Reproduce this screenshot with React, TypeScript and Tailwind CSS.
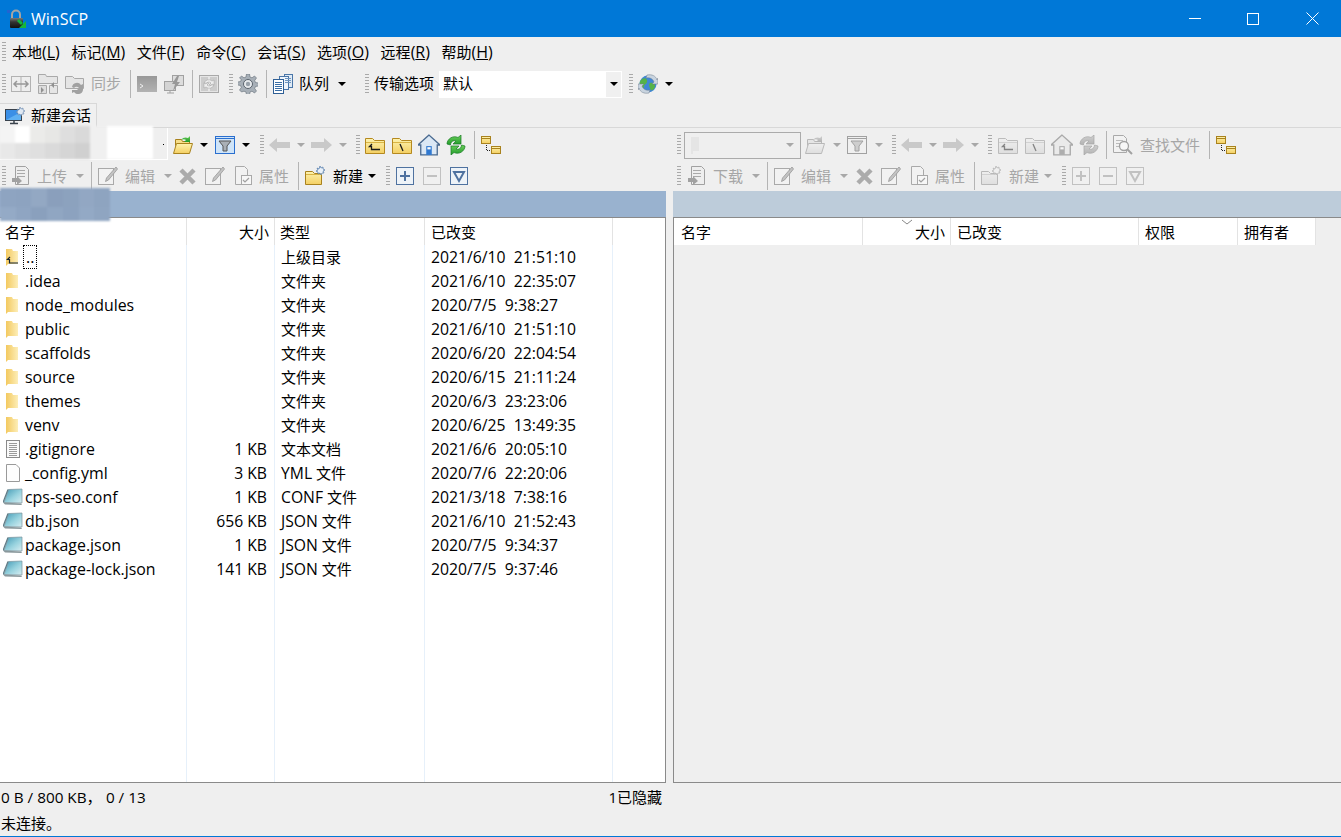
import React from "react";

const FONT = "font-['Open_Sans','Noto_Sans_CJK_SC',sans-serif]";

function Defs() {
  return (
    <svg className="absolute w-0 h-0" aria-hidden="true">
      <defs>
        <linearGradient id="fy" x1="0" y1="0" x2="0" y2="1">
          <stop offset="0" stopColor="#fdf3b0" />
          <stop offset="1" stopColor="#f4cf62" />
        </linearGradient>
        <linearGradient id="fn" x1="0" y1="0" x2="1" y2="0">
          <stop offset="0" stopColor="#f3c95f" />
          <stop offset="1" stopColor="#fdeeb8" />
        </linearGradient>
        <linearGradient id="gr" x1="0" y1="0" x2="0" y2="1">
          <stop offset="0" stopColor="#6ccf5a" />
          <stop offset="1" stopColor="#1f9a2a" />
        </linearGradient>
        <linearGradient id="term" x1="0" y1="0" x2="0" y2="1">
          <stop offset="0" stopColor="#444" />
          <stop offset="1" stopColor="#777" />
        </linearGradient>
        <linearGradient id="teal" x1="0" y1="0" x2="1" y2="1">
          <stop offset="0" stopColor="#3f97b3" />
          <stop offset="0.55" stopColor="#97d2de" />
          <stop offset="1" stopColor="#d8eef2" />
        </linearGradient>
        <linearGradient id="lock" x1="0" y1="0" x2="0" y2="1">
          <stop offset="0" stopColor="#7a7a7a" />
          <stop offset="0.4" stopColor="#333" />
          <stop offset="1" stopColor="#111" />
        </linearGradient>
      </defs>
    </svg>
  );
}

type I = { off?: boolean };
const dim = (off?: boolean) => (off ? "grayscale opacity-50" : "");

function Svg({ off, s = 20, children }: I & { s?: number; children: React.ReactNode }) {
  return (
    <svg width={s} height={s} viewBox="0 0 20 20" className={`shrink-0 ${dim(off)}`}>
      {children}
    </svg>
  );
}

const Lock = () => (
  <svg width="20" height="20" viewBox="0 0 20 20" className="shrink-0">
    <rect x="0" y="1" width="3" height="3" fill="#2a5fd0" opacity="0.8" />
    <path d="M5 9V5.500a4 4 0 0 1 8 0V9" fill="none" stroke="#a5a5a5" strokeWidth="2" />
    <rect x="3" y="9" width="13" height="10" rx="1" fill="url(#lock)" />
    <path d="M11 11l4 4" stroke="#17b53a" strokeWidth="3" />
    <path d="M19 12v7h-7z" fill="#17b53a" />
  </svg>
);

const Compare = (p: I) => (
  <Svg {...p}>
    <rect x="0.500" y="2.500" width="19" height="15" fill="#eee" stroke="#777" />
    <path d="M10 3v14" stroke="#777" />
    <path d="M3 10h14M6 7l-3 3 3 3M14 7l3 3-3 3" fill="none" stroke="#444" strokeWidth="1.500" />
  </Svg>
);
const SyncDirs = (p: I) => (
  <Svg {...p}>
    <path d="M.5.5h7l1 2h11v7H.5z" fill="#ddd" stroke="#666" />
    <path d="M.5 11.500h8v8h-8z" fill="#ccc" stroke="#666" />
    <path d="M11.500 11.500h8v8h-8z" fill="#ddd" stroke="#666" />
    <path d="M3 13l3 3-3 3zM16 8l-3 3 3 3z" fill="#333" />
  </Svg>
);
const SyncBrowse = (p: I) => (
  <Svg {...p}>
    <path d="M.5 2.500h7l2 2h9v10H.5z" fill="#ddd" stroke="#666" />
    <path d="M7 13a5 5 0 0 1 9-2l2-1v6h-6l2-2a3 3 0 0 0-5 0z" fill="#555" />
    <path d="M18 16a5 5 0 0 1-9 2l-2 1v-3z" fill="#555" />
  </Svg>
);
const Terminal = (p: I) => (
  <Svg {...p}>
    <rect x="0" y="2" width="20" height="16" fill="url(#term)" />
    <path d="M3 10l3 2-3 2" fill="none" stroke="#eee" strokeWidth="1" />
  </Svg>
);
const Putty = (p: I) => (
  <Svg {...p}>
    <rect x="8.500" y="1.500" width="11" height="10" fill="#ccc" stroke="#555" />
    <rect x=".5" y="7.500" width="11" height="9" fill="#bbb" stroke="#555" />
    <path d="M3 19h7M6 17v2" stroke="#555" />
    <path d="M13 2l-5 8h3l-2 7 7-9h-3l2-6z" fill="#444" />
  </Svg>
);
const SyncPanel = (p: I) => (
  <Svg {...p}>
    <rect x=".5" y="1.500" width="19" height="17" fill="#ddd" stroke="#666" />
    <path d="M2 3h7v14H2zM11 3h7v14h-7z" fill="#aaa" />
    <path d="M5 9a5 5 0 0 1 8-2l2-1v5h-5l2-2a3 3 0 0 0-5 1zM15 11a5 5 0 0 1-8 2l-2 1v-5h5l-2 2a3 3 0 0 0 5-1z" fill="#eee" stroke="#555" strokeWidth=".5" />
  </Svg>
);
const Gear = (p: I) => (
  <Svg {...p}>
    <path
      d="M8.500 0h3l.5 3 2 .8L16.500 2 18.500 4l-1.800 2.500.8 2 3 .5v3l-3 .5-.8 2 1.800 2.500-2 2-2.500-1.800-2 .8-.5 3h-3l-.5-3-2-.8L3.500 18 1.500 16l1.800-2.500-.8-2-3-.5v-3l3-.5.8-2L1.500 4l2-2L6 3.800l2-.8z"
      fill="#a7afb7"
      stroke="#626c76"
      strokeWidth=".6"
    />
    <circle cx="10" cy="10" r="4.500" fill="#e8ebee" stroke="#59626b" />
    <circle cx="10" cy="10" r="2.200" fill="#98a1aa" />
  </Svg>
);
const Queue = (p: I) => (
  <Svg {...p}>
    <rect x="11.500" y=".5" width="8" height="13" fill="#dfeaf5" stroke="#4a76a8" />
    <rect x="6.500" y="2.500" width="9" height="13" fill="#eef4fb" stroke="#4a76a8" />
    <rect x=".5" y="5.500" width="10" height="14" fill="#fff" stroke="#2f5f95" />
    <path d="M2 8.500h7M2 10.500h7M2 12.500h7M2 14.500h7M2 16.500h7" stroke="#3a6ea5" />
    <path d="M12 4.500h6M12 6.500h6M12 8.500h6" stroke="#6e95bf" />
  </Svg>
);
const Globe = (p: I) => (
  <Svg {...p}>
    <circle cx="10" cy="10" r="8.500" fill="#3f86d6" />
    <path d="M4 5c3-2 6 0 5 3s-3 2-3 5-3-1-4-3 1-4 2-5zM12 9c3-1 5 0 5 3s-3 5-4 4-3-6-1-7z" fill="#55b348" />
    <path d="M9 1c5-1 9 1 10 5l1-2v6h-6l2-2c-1-3-4-5-8-4z" fill="#c9d4df" stroke="#6c7b8a" strokeWidth=".5" />
    <path d="M11 19c-5 1-9-1-10-5l-1 2v-6h6l-2 2c1 3 4 5 8 4z" fill="#c9d4df" stroke="#6c7b8a" strokeWidth=".5" />
  </Svg>
);
const Monitor = () => (
  <Svg s={20}>
    <rect x="0.500" y="3.500" width="16" height="11" fill="#3b8fe6" stroke="#39424c" />
    <path d="M1 14l15-8v8H1z" fill="#5fb0f2" />
    <path d="M5 17.500h8M9 15v3" stroke="#39424c" strokeWidth="1.500" />
    <path d="M15 1l1 2 2-1 0 2 2 1-2 1 1 2-2 0-1 2-1-2-2 1 0-2-2-1 2-1-1-2 2 1z" fill="#dfe8f2" stroke="#5a7ea8" strokeWidth=".6" />
  </Svg>
);
const FolderOpen = (p: I) => (
  <Svg {...p}>
    <path d="M2.500 4.500h6l1 2h7v4h-14z" fill="#f6de8a" stroke="#a9821e" />
    <path d="M3.500 8.500h16l-3 10h-16z" fill="url(#fy)" stroke="#a9821e" />
    <path d="M8 5c2-3 5-3 7-2l2-2v6h-6l2-2c-1-1-3-1-5 0z" fill="url(#gr)" />
  </Svg>
);
const Filter = ({ off, on }: I & { on?: boolean }) => (
  <Svg off={off}>
    <rect x="0.500" y="1.500" width="19" height="17" fill={on ? "#cfe4f8" : "#f2f2f2"} stroke={on ? "#2a6fcf" : "#555"} />
    <path d="M1 3.500h18" stroke={on ? "#2a6fcf" : "#555"} strokeWidth="1" />
    <path d="M4 6h12l-4 5v5h-4v-5z" fill="#aab0b6" stroke="#555" />
  </Svg>
);
const ArrowL = () => (
  <svg width="21" height="14" viewBox="0 0 21 14" className="shrink-0">
    <path d="M0 7l8-7v4h13v6H8v4z" fill="#c9c9c9" />
  </svg>
);
const ArrowR = () => (
  <svg width="21" height="14" viewBox="0 0 21 14" className="shrink-0">
    <path d="M21 7l-8-7v4H0v6h13v4z" fill="#c9c9c9" />
  </svg>
);
const FolderUp = (p: I) => (
  <Svg {...p}>
    <path d="M.5 3.500h7l2 2h10v13H.5z" fill="url(#fy)" stroke="#b5891f" />
    <path d="M1 7.500h18" stroke="#d9b445" />
    <path d="M7 9l-2.500 2.500H6.500V14.500H15" fill="none" stroke="#1a1a1a" strokeWidth="1.300" />
  </Svg>
);
const FolderRoot = (p: I) => (
  <Svg {...p}>
    <path d="M.5 3.500h7l2 2h10v13H.5z" fill="url(#fy)" stroke="#b5891f" />
    <path d="M1 7.500h18" stroke="#d9b445" />
    <path d="M8 9l3 7" stroke="#1a1a1a" strokeWidth="1.300" />
  </Svg>
);
const Home = (p: I) => (
  <Svg {...p} s={22}>
    <path d="M10 1L0 10h2.500v9h15v-9H20z" fill="#dbe8f5" stroke="#4a6a90" strokeWidth="1.200" />
    <rect x="7.500" y="11" width="5" height="8" fill="#2f78d0" />
    <rect x="8.500" y="12" width="3" height="2" fill="#fff" />
  </Svg>
);
const Refresh = (p: I) => (
  <Svg {...p}>
    <path d="M1 9C1 4 7 0 12 2.500l3-2.500v9h-8l3-3C7 5 4.500 7 4.500 10z" fill="url(#gr)" stroke="#177a22" strokeWidth=".7" />
    <path d="M19 11c0 5-6 9-11 6.500L5 20v-9h8l-3 3c3 1 5.500-1 5.500-4z" fill="url(#gr)" stroke="#177a22" strokeWidth=".7" />
  </Svg>
);
const Tree = () => (
  <Svg s={20}>
    <rect x="0.500" y="1.500" width="9" height="7" fill="url(#fy)" stroke="#a9821e" />
    <path d="M1 3.500h8" stroke="#a9821e" />
    <rect x="10.500" y="11.500" width="9" height="7" fill="url(#fy)" stroke="#a9821e" />
    <path d="M11 13.500h8" stroke="#a9821e" />
    <path d="M5.500 10v5.500H10" fill="none" stroke="#222" strokeDasharray="1 1" />
  </Svg>
);
const Upload = (p: I) => (
  <Svg {...p}>
    <path d="M4.500.5h10l3 3v15h-13z" fill="#eee" stroke="#555" />
    <path d="M6 4.500h8M6 7.500h8M6 10.500h8" stroke="#666" />
    <path d="M1 12h5v-2l5 5-5 4v-3H1z" fill="#555" />
  </Svg>
);
const Edit = (p: I) => (
  <Svg {...p}>
    <rect x=".5" y="2.500" width="15" height="16" fill="#f5f5f5" stroke="#666" />
    <path d="M18 1l1.500 2-9 11-3 1.500 1-3.500z" fill="#999" stroke="#444" strokeWidth=".8" />
  </Svg>
);
const Xi = () => (
  <svg width="19" height="19" viewBox="0 0 19 19" className="shrink-0">
    <path d="M3 3l13 13M16 3L3 16" stroke="#ababab" strokeWidth="4.500" />
  </svg>
);
const Props = (p: I) => (
  <Svg {...p}>
    <path d="M2.500.5h9l3 3v15h-12z" fill="#f5f5f5" stroke="#666" />
    <rect x="8.500" y="9.500" width="10" height="9" fill="#fff" stroke="#666" />
    <path d="M10 14l2 2 4-4" fill="none" stroke="#555" strokeWidth="1.200" />
  </Svg>
);
const NewFolder = (p: I) => (
  <Svg {...p}>
    <path d="M.5 5.500h7l2 2h7v11H.5z" fill="url(#fy)" stroke="#a9821e" />
    <path d="M1 8.500h16" stroke="#d9b445" />
    <path d="M15 0l1 2 2-1 0 2 2 1-2 1 1 2-2 0-1 2-1-2-2 1 0-2-2-1 2-1-1-2 2 1z" fill="#e9f0f8" stroke="#4a76a8" strokeWidth=".7" />
  </Svg>
);
const BoxI = ({ off, kind }: I & { kind: "plus" | "minus" | "v" }) => (
  <svg width="18" height="18" viewBox="0 0 18 18" className={`shrink-0 ${off ? "opacity-35 grayscale" : ""}`}>
    <rect x=".5" y=".5" width="17" height="17" fill="#eef3f8" stroke="#4f72a0" />
    {kind === "plus" && <path d="M4 9h10M9 4v10" stroke="#4f72a0" strokeWidth="2" />}
    {kind === "minus" && <path d="M4 9h10" stroke="#4f72a0" strokeWidth="2" />}
    {kind === "v" && <path d="M4 5h10l-5 9z" fill="none" stroke="#4f72a0" strokeWidth="2" />}
  </svg>
);
const Find = (p: I) => (
  <Svg {...p}>
    <path d="M.5.5h10l3 3v14H.5z" fill="#f5f5f5" stroke="#666" />
    <path d="M3 5.500h7M3 8.500h4M3 11.500h3" stroke="#888" />
    <circle cx="11" cy="11" r="4.500" fill="#fff" stroke="#555" strokeWidth="1.300" />
    <path d="M14 14l5 5" stroke="#555" strokeWidth="2" />
  </Svg>
);
const FolderSmall = ({ up }: { up?: boolean }) => (
  <svg width="14" height="18" viewBox="0 0 14 18" className="shrink-0">
    <path d="M0 1h6l1 2h5v13H2l-2 2z" fill="url(#fn)" />
    {up && <path d="M4 9L1.500 11.500H3.500V15H12" fill="none" stroke="#123" strokeWidth="1.200" />}
  </svg>
);
const DocText = () => (
  <svg width="16" height="19" viewBox="0 0 16 19" className="shrink-0">
    <rect x=".5" y=".5" width="13" height="17" fill="#fafafa" stroke="#8a8a8a" />
    <path d="M3 3.500h8M3 5.500h8M3 7.500h8M3 9.500h8M3 11.500h8M3 13.500h8M3 15.500h8" stroke="#9a9a9a" />
  </svg>
);
const DocBlank = () => (
  <svg width="16" height="19" viewBox="0 0 16 19" className="shrink-0">
    <path d="M.5.5H10l3.500 3.500v13.500H.5z" fill="#fdfdfd" stroke="#9a9a9a" />
  </svg>
);
const Conf = () => (
  <svg width="20" height="18" viewBox="0 0 20 18" className="shrink-0 -ml-[3px] -mr-[1px]">
    <path d="M5.500 1.500L19 1v14L1 14.500z" fill="url(#teal)" stroke="#7d949c" strokeWidth=".7" />
    <path d="M0 14.500l18 1 1 1.500-17-.5z" fill="#8a989c" />
    <path d="M0 14.500L5 1.500" stroke="#5d7a85" strokeWidth="1.200" />
  </svg>
);

const Caret = ({ off, cls = "" }: { off?: boolean; cls?: string }) => (
  <svg width="8" height="4" viewBox="0 0 8 4" className={`shrink-0 ${cls}`}>
    <path d="M0 0h8L4 4z" fill={off ? "#a8a8a8" : "#000"} />
  </svg>
);
const Grip = ({ cls = "" }: { cls?: string }) => (
  <div className={`w-[4px] h-[21px] shrink-0 bg-[repeating-linear-gradient(to_bottom,#a9a9a9_0,#a9a9a9_1px,transparent_1px,transparent_3px)] ${cls}`} />
);
const Sep = ({ cls = "" }: { cls?: string }) => <div className={`w-px h-[28px] bg-[#b4b4b4] shrink-0 ${cls}`} />;
const T = ({ off, cls = "", children }: { off?: boolean; cls?: string; children: React.ReactNode }) => (
  <span className={`text-[15px] leading-none whitespace-nowrap ${off ? "text-[#a6a6a6]" : "text-black"} ${cls}`}>{children}</span>
);
const Slot = ({ children, w = "w-[27px]" }: { children: React.ReactNode; w?: string }) => (
  <div className={`${w} h-[24px] flex items-center justify-center shrink-0`}>{children}</div>
);

const menus: [string, string][] = [
  ["本地", "L"],
  ["标记", "M"],
  ["文件", "F"],
  ["命令", "C"],
  ["会话", "S"],
  ["选项", "O"],
  ["远程", "R"],
  ["帮助", "H"],
];

const rows: [React.ReactNode, string, string, string, string][] = [
  [<FolderSmall up />, "..", "", "上级目录", "2021/6/10  21:51:10"],
  [<FolderSmall />, ".idea", "", "文件夹", "2021/6/10  22:35:07"],
  [<FolderSmall />, "node_modules", "", "文件夹", "2020/7/5  9:38:27"],
  [<FolderSmall />, "public", "", "文件夹", "2021/6/10  21:51:10"],
  [<FolderSmall />, "scaffolds", "", "文件夹", "2020/6/20  22:04:54"],
  [<FolderSmall />, "source", "", "文件夹", "2020/6/15  21:11:24"],
  [<FolderSmall />, "themes", "", "文件夹", "2020/6/3  23:23:06"],
  [<FolderSmall />, "venv", "", "文件夹", "2020/6/25  13:49:35"],
  [<DocText />, ".gitignore", "1 KB", "文本文档", "2021/6/6  20:05:10"],
  [<DocBlank />, "_config.yml", "3 KB", "YML 文件", "2020/7/6  22:20:06"],
  [<Conf />, "cps-seo.conf", "1 KB", "CONF 文件", "2021/3/18  7:38:16"],
  [<Conf />, "db.json", "656 KB", "JSON 文件", "2021/6/10  21:52:43"],
  [<Conf />, "package.json", "1 KB", "JSON 文件", "2020/7/5  9:34:37"],
  [<Conf />, "package-lock.json", "141 KB", "JSON 文件", "2020/7/5  9:37:46"],
];

const mosaicTop = ["#f4f4f4", "#ffffff", "#ebebe9", "#e7e7e5", "#dedede", "#d9d9d9"];
const mosaicMid = ["#e8e8e8", "#e3e3e3", "#dfdfdf", "#dadada", "#d5d5d5", "#d0d0d0"];
const pathTop = ["#8ea4c1", "#8da3c0", "#93a8c3", "#8a9fbc", "#8ca2be", "#92a7c3", "#8ea4c0"];
const pathMid = ["#94aac6", "#8fa5c2", "#8aa0bd", "#90a6c2", "#8ca2bf", "#93a9c5", "#8fa5c1"];

function TypeCell({ v }: { v: string }) {
  const parts = v.split(" ");
  if (parts.length === 1) return <>{v}</>;
  return (
    <>
      <span className="text-[15.700px]">{parts[0]}</span> {parts[1]}
    </>
  );
}

function LeftPanel() {
  return (
    <div className="relative w-[666px] shrink-0 flex flex-col h-full">
      <div className="h-[32px] pt-[2px] flex items-center">
        <div className="w-[173px] shrink-0" />
        <FolderOpen />
        <Caret cls="ml-[7px]" />
        <div className="ml-[7px]"><Filter on /></div>
        <Caret cls="ml-[7px]" />
        <Grip cls="ml-[10px]" />
        <div className="ml-[5px]"><ArrowL /></div>
        <Caret off cls="ml-[7px]" />
        <div className="ml-[6px]"><ArrowR /></div>
        <Caret off cls="ml-[7px]" />
        <Grip cls="ml-[9px]" />
        <div className="ml-[5px]"><FolderUp /></div>
        <div className="ml-[7px]"><FolderRoot /></div>
        <div className="ml-[6px]"><Home /></div>
        <div className="ml-[6px]"><Refresh /></div>
        <Sep cls="ml-[8px]" />
        <div className="ml-[6px]"><Tree /></div>
      </div>
      <div className="h-[31px] pt-[1px] flex items-center">
        <Grip cls="ml-[2px]" />
        <div className="ml-[5px]"><Upload off /></div>
        <T off cls="ml-[6px]">上传</T>
        <Caret off cls="ml-[9px]" />
        <Sep cls="ml-[7px]" />
        <div className="ml-[6px]"><Edit off /></div>
        <T off cls="ml-[7px]">编辑</T>
        <Caret off cls="ml-[9px]" />
        <div className="ml-[6px]"><Xi /></div>
        <div className="ml-[8px]"><Edit off /></div>
        <div className="ml-[8px]"><Props off /></div>
        <T off cls="ml-[6px]">属性</T>
        <Sep cls="ml-[9px]" />
        <div className="ml-[6px]"><NewFolder /></div>
        <T cls="ml-[8px]">新建</T>
        <Caret cls="ml-[5px]" />
        <Grip cls="ml-[10px]" />
        <div className="ml-[6px]"><BoxI kind="plus" /></div>
        <div className="ml-[9px]"><BoxI kind="minus" off /></div>
        <div className="ml-[9px]"><BoxI kind="v" /></div>
      </div>
      <div className="h-[26px] bg-[#99b2cf] shrink-0" />
      <div className="flex-1 bg-white border-t border-r border-b border-[#8a8a8a] flex flex-col min-h-0 relative">
        <div className="h-[27px] flex items-center shrink-0 text-[15px] text-black">
          <div className="w-[187px] pl-[5px] pt-[1px] border-r border-[#e3e3e3] h-full flex items-center">名字</div>
          <div className="w-[88px] pr-[5px] pt-[1px] border-r border-[#e3e3e3] h-full flex items-center justify-end">大小</div>
          <div className="w-[150px] pl-[5px] pt-[1px] border-r border-[#e3e3e3] h-full flex items-center">类型</div>
          <div className="w-[188px] pl-[6px] pt-[1px] border-r border-[#e3e3e3] h-full flex items-center">已改变</div>
        </div>
        <div className="flex-1 relative">
          <div className="absolute inset-0 flex pointer-events-none">
            <div className="w-[187px] border-r border-[#e6f0fa]" />
            <div className="w-[88px] border-r border-[#e6f0fa]" />
            <div className="w-[150px] border-r border-[#e6f0fa]" />
            <div className="w-[188px] border-r border-[#e6f0fa]" />
          </div>
          <div className="relative flex flex-col text-[15px] text-black">
            {rows.map((r, i) => (
              <div key={i} className="h-[24px] flex items-baseline leading-[24px]">
                <div className="w-[187px] flex items-baseline h-[24px]">
                  <div className="w-[25px] pl-[6px] flex items-center shrink-0 self-center">{r[0]}</div>
                  <div className="whitespace-nowrap text-[15.900px]">
                    <span className={i === 0 ? "outline-1 outline-dotted outline-black px-[2px] -ml-[1px]" : ""}>{r[1]}</span>
                  </div>
                </div>
                <div className="w-[88px] pr-[8px] text-right whitespace-nowrap text-[15.700px]">{r[2]}</div>
                <div className="w-[150px] pl-[6px] whitespace-nowrap"><TypeCell v={r[3]} /></div>
                <div className="pl-[6px] whitespace-pre text-[15.750px]">{r[4]}</div>
              </div>
            ))}
          </div>
        </div>
      </div>
      {/* obscured session path */}
      <div className="absolute left-0 top-0 w-[168px] h-[32px] border-r border-b border-white" />
      <div className="absolute left-[163px] top-[16px] w-px h-px bg-black" />
      <div className="absolute left-0 -top-[2px] w-[153px] h-[33px] flex flex-col blur-[1px]">
        <div className="flex h-[17px]">
          {mosaicTop.map((c, i) => (
            <div key={i} className="w-[15px]" style={{ background: c }} />
          ))}
          <div className="w-[17px] bg-[#f0f0f0]" />
          <div className="w-[46px] bg-white" />
        </div>
        <div className="flex h-[16px]">
          {mosaicMid.map((c, i) => (
            <div key={i} className="w-[15px]" style={{ background: c }} />
          ))}
          <div className="w-[17px] bg-[#f0f0f0]" />
          <div className="w-[46px] bg-white" />
        </div>
      </div>
      <div className="absolute left-0 top-[60px] w-[110px] h-[33px] flex flex-col blur-[1px] overflow-hidden">
        <div className="flex h-[19px]">
          {pathTop.map((c, i) => (
            <div key={i} className="w-[16px]" style={{ background: c }} />
          ))}
        </div>
        <div className="flex h-[14px]">
          {pathMid.map((c, i) => (
            <div key={i} className="w-[16px]" style={{ background: c }} />
          ))}
        </div>
      </div>
    </div>
  );
}

function RightPanel() {
  return (
    <div className="flex-1 min-w-0 flex flex-col h-full">
      <div className="h-[32px] pt-[2px] flex items-center">
        <Grip cls="ml-[4px]" />
        <div className="ml-[3px] w-[117px] h-[27px] border border-[#ababab] flex items-center justify-between pl-[5px] pr-[6px] shrink-0">
          <svg width="12" height="19" viewBox="0 0 12 19" className="opacity-50">
            <path d="M1 1h8v14H3v3H1z" fill="#ddd" />
          </svg>
          <Caret off />
        </div>
        <div className="ml-[4px]"><FolderOpen off /></div>
        <Caret off cls="ml-[8px]" />
        <div className="ml-[6px]"><Filter off /></div>
        <Caret off cls="ml-[8px]" />
        <Grip cls="ml-[9px]" />
        <div className="ml-[5px]"><ArrowL /></div>
        <Caret off cls="ml-[7px]" />
        <div className="ml-[6px]"><ArrowR /></div>
        <Caret off cls="ml-[7px]" />
        <Grip cls="ml-[9px]" />
        <div className="ml-[6px]"><FolderUp off /></div>
        <div className="ml-[7px]"><FolderRoot off /></div>
        <div className="ml-[6px]"><Home off /></div>
        <div className="ml-[6px]"><Refresh off /></div>
        <Sep cls="ml-[7px]" />
        <div className="ml-[6px]"><Find off /></div>
        <T off cls="ml-[7px]">查找文件</T>
        <Sep cls="ml-[9px]" />
        <div className="ml-[6px]"><Tree /></div>
      </div>
      <div className="h-[31px] pt-[1px] flex items-center">
        <Grip cls="ml-[4px]" />
        <div className="ml-[6px]"><Upload off /></div>
        <T off cls="ml-[6px]">下载</T>
        <Caret off cls="ml-[9px]" />
        <Sep cls="ml-[7px]" />
        <div className="ml-[6px]"><Edit off /></div>
        <T off cls="ml-[7px]">编辑</T>
        <Caret off cls="ml-[9px]" />
        <div className="ml-[7px]"><Xi /></div>
        <div className="ml-[7px]"><Edit off /></div>
        <div className="ml-[8px]"><Props off /></div>
        <T off cls="ml-[6px]">属性</T>
        <Sep cls="ml-[9px]" />
        <div className="ml-[6px]"><NewFolder off /></div>
        <T off cls="ml-[8px]">新建</T>
        <Caret off cls="ml-[5px]" />
        <Grip cls="ml-[10px]" />
        <div className="ml-[6px]"><BoxI kind="plus" off /></div>
        <div className="ml-[9px]"><BoxI kind="minus" off /></div>
        <div className="ml-[9px]"><BoxI kind="v" off /></div>
      </div>
      <div className="h-[26px] bg-[#bdccda] shrink-0" />
      <div className="flex-1 bg-[#efefef] border-t border-l border-b border-[#8a8a8a] min-h-0 relative">
        <div className="h-[27px] flex bg-white w-[642px] text-[15px] text-black relative">
          <div className="w-[189px] pl-[7px] pt-[1px] border-r border-[#e3e3e3] flex items-center">名字</div>
          <div className="w-[88px] pr-[5px] pt-[1px] border-r border-[#e3e3e3] flex items-center justify-end">大小</div>
          <div className="w-[188px] pl-[6px] pt-[1px] border-r border-[#e3e3e3] flex items-center">已改变</div>
          <div className="w-[99px] pl-[6px] pt-[1px] border-r border-[#e3e3e3] flex items-center">权限</div>
          <div className="w-[78px] pl-[6px] pt-[1px] border-r border-[#e3e3e3] flex items-center">拥有者</div>
          <svg width="12" height="6" viewBox="0 0 12 6" className="absolute left-[227px] top-[1px]">
            <path d="M1 1l5 4 5-4" fill="none" stroke="#888" />
          </svg>
        </div>
      </div>
    </div>
  );
}

export default function App() {
  return (
    <div className={`w-[1341px] h-[837px] bg-[#efefef] flex flex-col overflow-hidden ${FONT}`}>
      <Defs />
      <div className="h-[37px] bg-[#0078d7] flex items-center shrink-0">
        <div className="ml-[7px]"><Lock /></div>
        <span className="ml-[4px] text-[16px] text-white">WinSCP</span>
        <div className="ml-auto flex items-center mr-[6px]">
          <div className="w-[46px] h-[37px] flex items-center justify-center">
            <div className="w-[12px] h-px bg-white" />
          </div>
          <div className="ml-[12px] w-[46px] h-[37px] flex items-center justify-center">
            <div className="w-[12px] h-[12px] border border-white" />
          </div>
          <div className="ml-[13px] w-[46px] h-[37px] flex items-center justify-center">
            <svg width="13" height="13" viewBox="0 0 13 13">
              <path d="M.5.5l12 12M12.500.5l-12 12" stroke="#fff" strokeWidth="1" />
            </svg>
          </div>
        </div>
      </div>

      <div className="h-[31px] flex items-center shrink-0">
        <Grip cls="ml-[2px]" />
        <div className="ml-[6px] flex gap-[11.600px] pb-[2px]">
          {menus.map(([a, b]) => (
            <span key={b} className="text-[15px] text-black leading-none whitespace-nowrap">
              {a}
              <span className="text-[16px]">
                (<span className="underline">{b}</span>)
              </span>
            </span>
          ))}
        </div>
      </div>

      <div className="h-[32px] flex items-center shrink-0">
        <Grip cls="ml-[2px]" />
        <div className="ml-[1px] flex items-center">
          <Slot><Compare off /></Slot>
          <Slot><SyncDirs off /></Slot>
          <Slot><SyncBrowse off /></Slot>
        </div>
        <T off cls="ml-[3px] pb-[2px]">同步</T>
        <Sep cls="ml-[9px]" />
        <div className="ml-[6px]"><Terminal off /></div>
        <div className="ml-[7px]"><Putty off /></div>
        <Sep cls="ml-[8px]" />
        <div className="ml-[6px]"><SyncPanel off /></div>
        <Grip cls="ml-[10px]" />
        <div className="ml-[5px]"><Gear /></div>
        <Sep cls="ml-[8px]" />
        <div className="ml-[6px]"><Queue /></div>
        <T cls="ml-[6px] pb-[2px]">队列</T>
        <Caret cls="ml-[9px]" />
        <Grip cls="ml-[19px]" />
        <T cls="ml-[5px] pb-[2px]">传输选项</T>
        <div className="ml-[5px] w-[183px] h-[27px] bg-white flex items-center shrink-0 pl-[3px] border border-white">
          <T cls="pb-[2px]">默认</T>
          <div className="ml-auto w-[15px] h-full bg-[#f0f0f0] flex items-center justify-center">
            <Caret />
          </div>
        </div>
        <Grip cls="ml-[7px]" />
        <div className="ml-[5px]"><Globe /></div>
        <Caret cls="ml-[7px]" />
      </div>

      <div className="h-[28px] flex items-end shrink-0 border-b border-[#d8d8d8]">
        <div className="w-[97px] h-[25px] border-t border-r border-[#d8d8d8] flex items-center pl-[5px] -mb-px bg-[#f0f0f0]">
          <Monitor />
          <T cls="ml-[6px] pb-[2px]">新建会话</T>
        </div>
      </div>

      <div className="h-[655px] flex shrink-0">
        <LeftPanel />
        <div className="w-[7px] shrink-0" />
        <RightPanel />
      </div>

      <div className="h-[30px] pb-[2px] flex items-center shrink-0 text-[15px] text-black">
        <span className="ml-[1px] whitespace-pre text-[15.300px]">0 B / 800 KB， 0 / 13</span>
        <span className="ml-auto mr-[679px]">1已隐藏</span>
      </div>
      <div className="h-[23px] pb-[2px] flex items-center shrink-0 text-[15px] text-black">
        <span className="ml-[1px]">未连接。</span>
      </div>
      <div className="flex-1 bg-[#0078d7]" />
    </div>
  );
}
